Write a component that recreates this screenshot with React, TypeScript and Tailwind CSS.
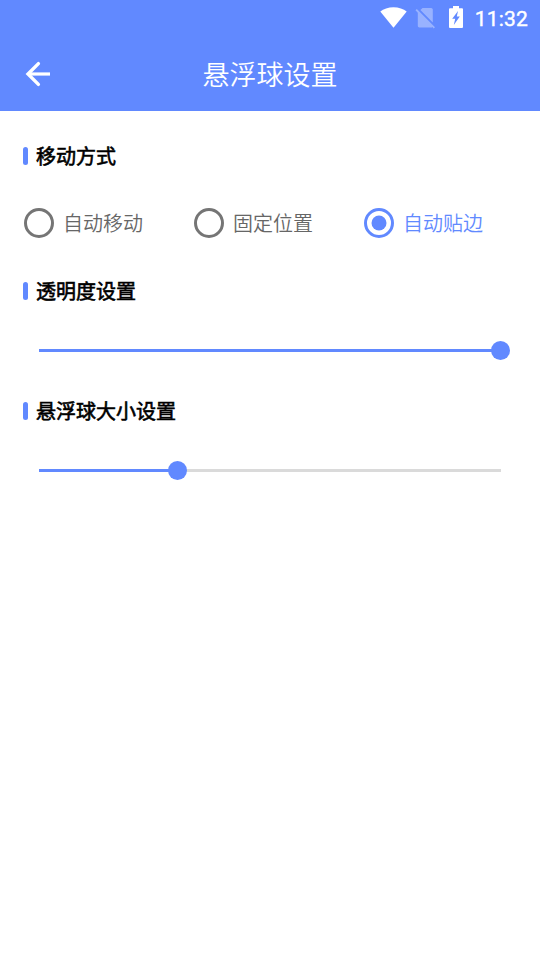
import { useState } from 'react';
import clsx from 'clsx';

const MOVE_MODES = ['自动移动', '固定位置', '自动贴边'];

function StatusBar() {
  return (
    <div className="flex h-9 items-start justify-end pr-3 text-white">
      <svg className="mt-[7px] h-[21px] w-[27px]" viewBox="0 0 27 21" fill="currentColor">
        <path d="M13.5 20.8L0.3 4.6C3.6 1.9 8.2 0.2 13.5 0.2s9.9 1.7 13.2 4.4z" />
      </svg>
      <svg className="ml-1.5 mt-[5px] size-[25px] opacity-35" viewBox="0 0 24 24" fill="currentColor">
        <path d="M18.99 4.4c0-.9-.7-1.6-1.6-1.6H9.2L7.1 4.78 19 16.68V4.4zM3.65 3.88L2.38 5.15 4.6 7.4V20c0 .9.7 1.6 1.6 1.6H17.4c.5 0 .9-.2 1.2-.6l1.24 1.62 1.27-1.27L3.65 3.88z" />
      </svg>
      <svg className="ml-[11px] mt-1.5 h-[22px] w-[14px]" viewBox="0 0 14 22" fill="currentColor">
        <path
          fillRule="evenodd"
          d="M4 0h6v2.2h3A1 1 0 0 1 14 3.2v17.8a1 1 0 0 1-1 1H1a1 1 0 0 1-1-1V3.2a1 1 0 0 1 1-1h3zM9 5L3.2 12.8h3L4.8 19L10.8 10.4H7.8z"
        />
      </svg>
      <span className="ml-3 mt-[5px] font-[Roboto] text-[21px] leading-7 font-normal tracking-[0.2px] [-webkit-text-stroke:0.4px_white]">
        11:32
      </span>
    </div>
  );
}

function Header() {
  return (
    <header className="grid h-[75px] grid-cols-[76px_1fr_76px] items-center text-white">
      <button type="button" aria-label="返回" className="pl-[25px]">
        <svg className="h-[26px] w-[26px]" viewBox="0 0 26 26" fill="none" stroke="currentColor">
          <path d="M13.4 2.6L3 13L13.4 23.4" strokeWidth="3.4" strokeLinecap="round" />
          <path d="M3 13H25" strokeWidth="3.2" />
        </svg>
      </button>
      <h1 className="text-center text-[27px] leading-10 font-[350]">悬浮球设置</h1>
    </header>
  );
}

function SectionTitle({ children }: { children: string }) {
  return (
    <h2 className="flex h-[30px] items-center gap-2 pl-[23px] text-xl text-black">
      <span className="h-[18px] w-[5px] rounded-full bg-[#6189ff]" />
      <span className="[-webkit-text-stroke:0.6px_black]">{children}</span>
    </h2>
  );
}

function RadioItem({ label, checked, onSelect }: { label: string; checked: boolean; onSelect: () => void }) {
  return (
    <button
      type="button"
      role="radio"
      aria-checked={checked}
      onClick={onSelect}
      className={clsx('flex w-[170px] items-center gap-[9px] text-xl font-[350]', checked ? 'text-[#6189ff]' : 'text-[#666666]')}
    >
      <svg className={clsx('size-[30px]', checked ? 'text-[#6189ff]' : 'text-[#757575]')} viewBox="0 0 30 30">
        <circle cx="15" cy="15" r="13.5" fill="none" stroke="currentColor" strokeWidth="3" />
        {checked && <circle cx="15" cy="15" r="7.5" fill="currentColor" />}
      </svg>
      {label}
    </button>
  );
}

function Slider({ value, label }: { value: number; label: string }) {
  return (
    <div
      role="slider"
      aria-label={label}
      aria-valuenow={value}
      className="mr-[30px] ml-[39px] flex h-[19px] items-center"
    >
      <div className="flex h-[3px] w-[462px] items-center bg-[#dadada]">
        <div className="h-[3px] shrink-0 bg-[#6189ff]" style={{ width: `${value}%` }} />
        <div className="-ml-[10px] size-[19px] shrink-0 rounded-full bg-[#6189ff]" />
      </div>
    </div>
  );
}

export default function App() {
  const [mode, setMode] = useState(2);

  return (
    <div className="min-h-screen w-full overflow-hidden bg-white font-['Noto_Sans_CJK_SC',sans-serif]">
      <div className="bg-[#6189ff]">
        <StatusBar />
        <Header />
      </div>

      <main className="pt-[30px]">
        <SectionTitle>移动方式</SectionTitle>
        <div role="radiogroup" className="mt-[37px] flex pl-6">
          {MOVE_MODES.map((label, i) => (
            <RadioItem key={label} label={label} checked={mode === i} onSelect={() => setMode(i)} />
          ))}
        </div>

        <div className="mt-[38px]">
          <SectionTitle>透明度设置</SectionTitle>
          <div className="mt-[35px]">
            <Slider label="透明度" value={100} />
          </div>
        </div>

        <div className="mt-9">
          <SectionTitle>悬浮球大小设置</SectionTitle>
          <div className="mt-[35px]">
            <Slider label="悬浮球大小" value={30} />
          </div>
        </div>
      </main>
    </div>
  );
}
